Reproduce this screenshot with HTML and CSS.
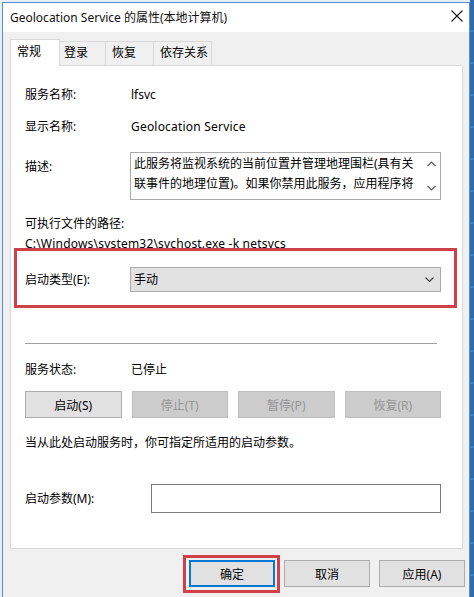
FILE: index.html
```html
<!DOCTYPE html>
<html lang="zh-CN">
<head>
<meta charset="utf-8">
<title>Geolocation Service 的属性(本地计算机)</title>
<link rel="stylesheet" href="styles.css">
</head>
<body>
<div class="screen">
  <div class="window">
    <div class="titlebar">
      <span class="title">Geolocation Service 的属性(本地计算机)</span>
      <svg class="close" width="12" height="12" viewBox="0 0 12 12"><path d="M0.5 0.5L11.5 11.5M11.5 0.5L0.5 11.5" stroke="#1a1a1a" stroke-width="1.1" fill="none"/></svg>
    </div>
    <div class="dialog">
      <div class="tabs">
        <div class="tab active t1">常规</div>
        <div class="tab t2">登录</div>
        <div class="tab t3">恢复</div>
        <div class="tab t4">依存关系</div>
      </div>
      <div class="panel">
        <div class="row r-name"><span class="label">服务名称:</span><span class="value">lfsvc</span></div>
        <div class="row r-display"><span class="label">显示名称:</span><span class="value latin">Geolocation Service</span></div>
        <div class="row r-desc">
          <span class="label desc-label">描述:</span>
          <div class="textarea">
            <div class="ta-text">此服务将监视系统的当前位置并管理地理围栏(具有关<br>联事件的地理位置)。如果你禁用此服务，应用程序将</div>
            <div class="ta-scroll">
              <svg width="9" height="6" viewBox="0 0 9 6"><path d="M0.5 5L4.5 1L8.5 5" stroke="#606060" stroke-width="1.2" fill="none"/></svg>
              <svg width="9" height="6" viewBox="0 0 9 6"><path d="M0.5 1L4.5 5L8.5 1" stroke="#606060" stroke-width="1.2" fill="none"/></svg>
            </div>
          </div>
        </div>
        <div class="path-label">可执行文件的路径:</div>
        <div class="path latin">C:\Windows\system32\svchost.exe -k netsvcs</div>
        <div class="row r-type">
          <span class="label">启动类型(E):</span>
          <div class="select"><span>手动</span><svg width="9" height="5" viewBox="0 0 9 5"><path d="M0.5 0.5L4.5 4.5L8.5 0.5" stroke="#404040" stroke-width="1.1" fill="none"/></svg></div>
        </div>
        <div class="sep"></div>
        <div class="row r-status"><span class="label">服务状态:</span><span class="value">已停止</span></div>
        <div class="svc-buttons">
          <div class="btn">启动(S)</div>
          <div class="btn disabled">停止(T)</div>
          <div class="btn disabled">暂停(P)</div>
          <div class="btn disabled">恢复(R)</div>
        </div>
        <div class="note">当从此处启动服务时，你可指定所适用的启动参数。</div>
        <div class="row r-params"><span class="label params-label">启动参数(M):</span><div class="input"></div></div>
      </div>
      <div class="footer">
        <div class="btn fbtn default">确定</div>
        <div class="btn fbtn">取消</div>
        <div class="btn fbtn">应用(A)</div>
      </div>
    </div>
    <div class="highlight hl-type"></div>
    <div class="highlight hl-ok"></div>
  </div>
  <div class="desktop-strip"></div>
</div>
</body>
</html>
```
FILE: styles.css
```css
* { box-sizing: border-box; }
html, body { margin: 0; padding: 0; }
body {
  background: #e6edf5;
  font-family: "Noto Sans", "Noto Sans CJK SC", sans-serif;
  font-size: 12px;
  color: #000;
}
.screen {
  display: flex;
  height: 597px;
  overflow: hidden;
}
.window {
  position: relative;
  margin: 2px 0 0 2px;
  width: 468px;
  height: 600px;
  border: 1px solid #5b8fca;
  background: #f0f0f0;
  flex: none;
}
.desktop-strip {
  flex: 1;
  background: repeating-linear-gradient(180deg, #2f6cab 0 30px, #3f80c2 30px 32px);
}
.titlebar {
  height: 29px;
  background: #fff;
  display: flex;
  justify-content: space-between;
  align-items: flex-start;
  padding: 0 6px 0 7px;
}
.title {
  font-size: 12px;
  line-height: 29px;
  color: #111;
}
.close { margin-top: 7px; }
.dialog {
  padding: 7px 4px 0 7px;
}
.tabs {
  display: flex;
  align-items: flex-end;
  height: 27px;
  position: relative;
  z-index: 1;
}
.tab {
  height: 24px;
  margin-bottom: 1px;
  border: 1px solid #d9d9d9;
  border-bottom: none;
  background: #f0f0f0;
  line-height: 22px;
  padding-left: 4px;
  white-space: nowrap;
}
.tab.active {
  height: 27px;
  margin-bottom: 0;
  background: #fff;
  line-height: 24px;
  padding-left: 6px;
}
.t1 { width: 50px; }
.t2 { width: 46px; border-left: none; }
.t3 { width: 48px; border-left: none; padding-left: 6px; }
.t4 { width: 58px; border-left: none; padding-left: 6px; }
.panel {
  position: relative;
  z-index: 0;
  width: 453px;
  height: 484px;
  margin-top: -1px;
  background: #fff;
  border: 1px solid #d9d9d9;
  padding: 21px 21px 0 14px;
}
.latin { letter-spacing: 0.2px; }
.row {
  display: flex;
  align-items: center;
  line-height: 16px;
}
.label { width: 105px; flex: none; }
.value { padding-left: 1px; }
.r-display { margin-top: 16px; }
.r-desc { margin-top: 17px; align-items: flex-start; }
.desc-label { margin-top: 7px; }
.textarea {
  flex: 1;
  height: 48px;
  border: 1px solid #a9a9a9;
  display: flex;
  overflow: hidden;
}
.ta-text {
  flex: 1;
  padding: 1px 0 0 3px;
  line-height: 20px;
  white-space: nowrap;
  overflow: hidden;
}
.ta-scroll {
  width: 17px;
  flex: none;
  display: flex;
  flex-direction: column;
  justify-content: space-between;
  align-items: center;
  padding: 8px 0 8px;
}
.path-label { margin-top: 14px; line-height: 20px; }
.path { line-height: 20px; white-space: nowrap; }
.r-type { margin-top: 13px; }
.select {
  flex: 1;
  height: 25px;
  background: #e1e1e1;
  border: 1px solid #adadad;
  display: flex;
  align-items: center;
  justify-content: space-between;
  padding: 0 6px 0 3px;
}
.sep {
  margin-top: 51px;
  margin-right: 4px;
  height: 1px;
  background: #a0a0a0;
}
.r-status { margin-top: 18px; }
.svc-buttons {
  margin-top: 13px;
  display: grid;
  grid-template-columns: repeat(4, 1fr);
  column-gap: 10px;
}
.btn {
  height: 27px;
  background: #e1e1e1;
  border: 1px solid #adadad;
  display: flex;
  align-items: center;
  justify-content: center;
  white-space: nowrap;
}
.btn.disabled {
  background: #cccccc;
  border-color: #bfbfbf;
  color: #959595;
}
.note { margin-top: 17px; line-height: 16px; white-space: nowrap; }
.r-params { margin-top: 33px; }
.params-label { width: 126px; }
.input {
  flex: 1;
  height: 29px;
  border: 1px solid #7a7a7a;
  background: #fff;
}
.footer {
  margin-top: 11px;
  display: flex;
  justify-content: flex-end;
  gap: 9px;
}
.fbtn { width: 86px; }
.fbtn.default {
  border: 1px solid #0078d7;
  box-shadow: inset 0 0 0 1px #0078d7;
}
.highlight {
  position: absolute;
  border: 3px solid #cf4049;
}
.hl-type { left: 11px; top: 245px; width: 443px; height: 60px; }
.hl-ok { left: 180px; top: 552px; width: 97px; height: 38px; }
```
